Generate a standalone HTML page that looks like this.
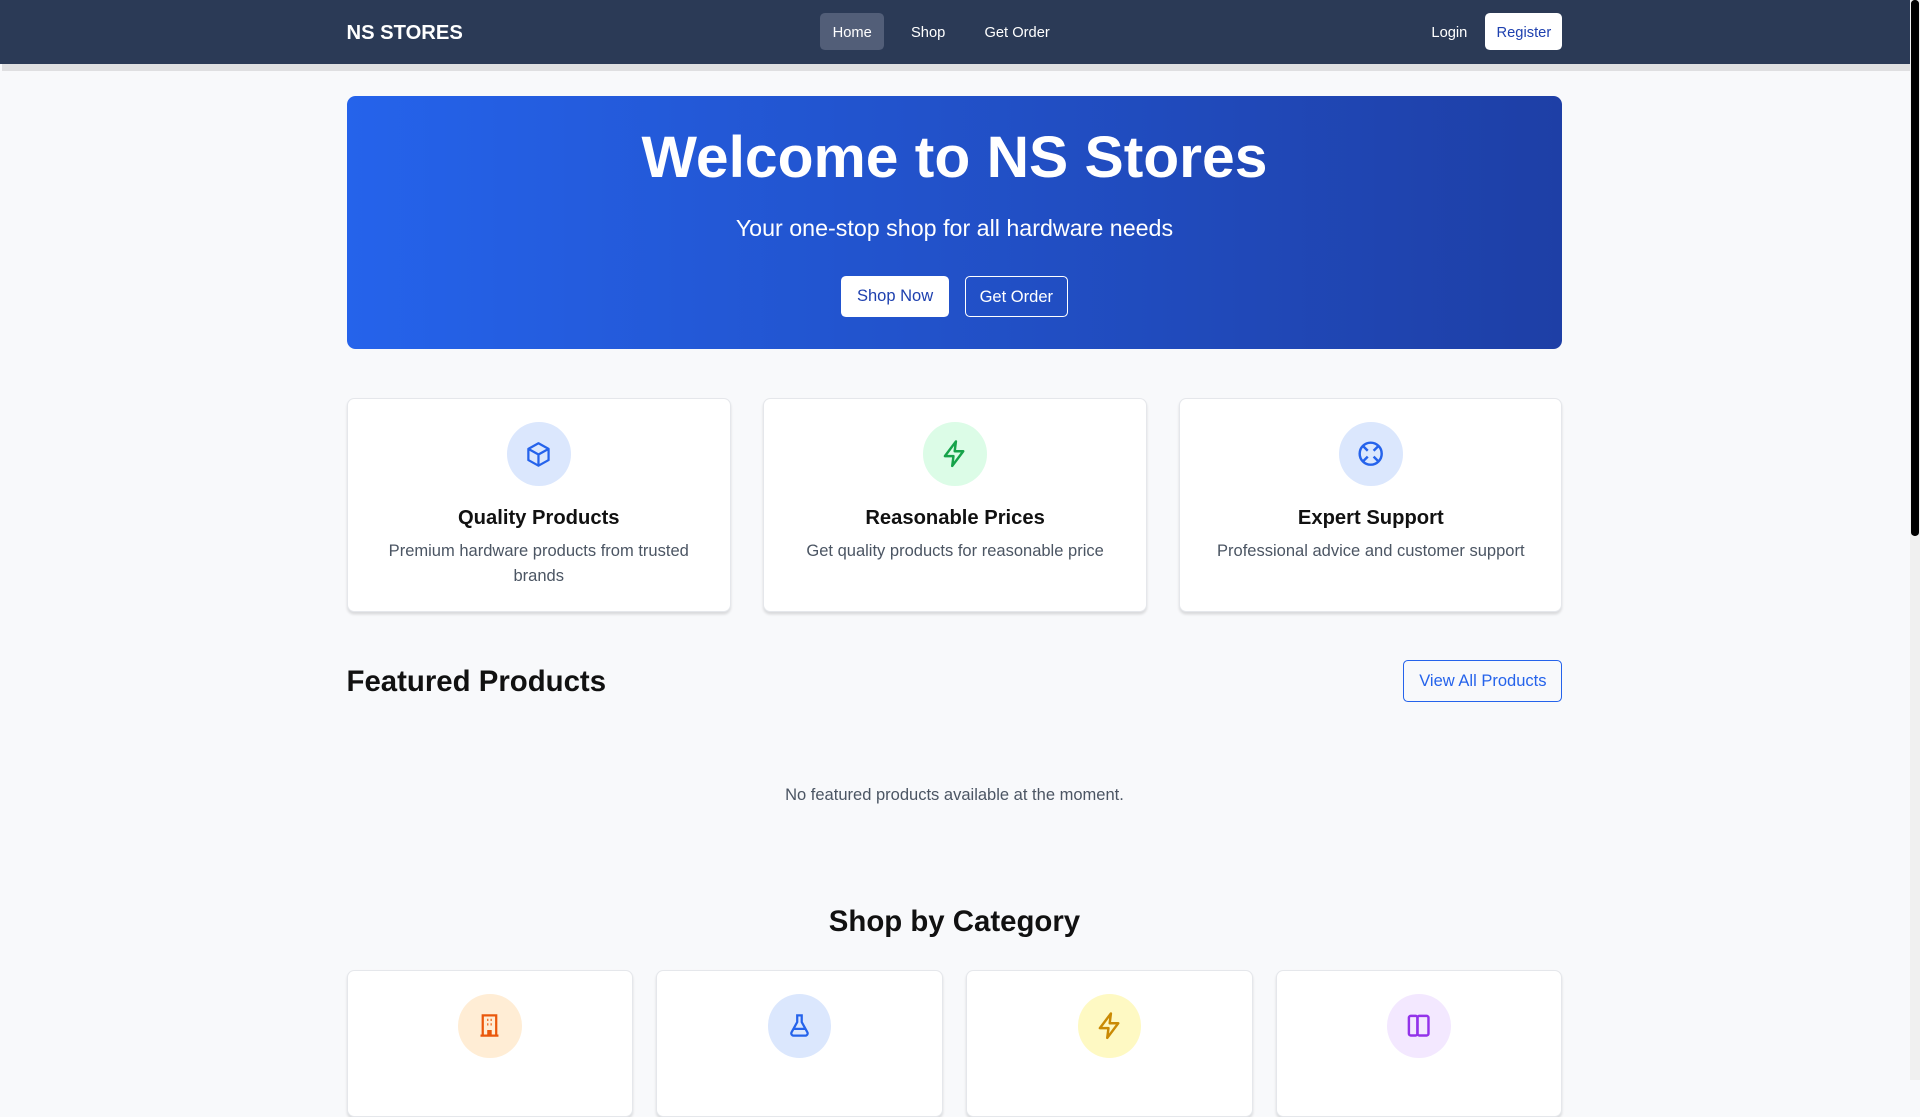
<!DOCTYPE html>
<html><head><meta charset="utf-8"><style>
html{zoom:1.22449}
*{box-sizing:border-box;margin:0;padding:0}
body{width:1568px;height:882px;overflow:hidden;background:#f8f9fb;font-family:"Liberation Sans",Arial,sans-serif;position:relative;color:#111}
.nav{position:absolute;left:0;top:0;width:1560px;height:52px;background:#2b3a56}
.strip{position:absolute;left:2px;top:52px;width:1558px;height:6px;background:#dfdfe1}
.sb{position:absolute;left:1560px;top:0;width:8px;height:882px;background:#f0f0f0}
.sb div{position:absolute;left:1px;top:0;width:6px;height:438px;background:#000;border-radius:3px}
.logo{position:absolute;left:283px;top:18px;color:#fff;font-weight:bold;font-size:16.5px}
.nl{position:absolute;top:11px;height:30px;line-height:34px;color:#fff;font-size:12px;padding:0 10px;border-radius:4px;white-space:nowrap}
.hero{position:absolute;left:283px;top:78px;width:993px;height:207px;border-radius:7px;background:linear-gradient(90deg,#2563eb,#1e3fa6);color:#fff;text-align:center}
.hero h1{font-size:48px;margin-top:23px;line-height:56px}
.hero p{font-size:19px;margin-top:19px}
.btn{position:absolute;top:147px;height:34px;line-height:32px;font-size:13.5px;border-radius:4px;white-space:nowrap;text-align:center}
.card{position:absolute;background:#fff;border:1px solid #e5e7eb;border-radius:6px;box-shadow:0 2px 2px rgba(0,0,0,.12);text-align:center}
.ic{width:52px;height:52px;border-radius:50%;margin:19px auto 0;display:flex;align-items:center;justify-content:center}
.card h3{font-size:16.5px;margin-top:17px}
.card p{font-size:13.5px;color:#4b5563;line-height:20px;margin:8px 16px 0}
h2{position:absolute;font-size:24px;font-weight:bold}
</style></head><body>
<div class="nav">
<div class="logo">NS STORES</div>
<div class="nl" style="left:670px;background:#525e78">Home</div>
<div class="nl" style="left:734px">Shop</div>
<div class="nl" style="left:794px">Get Order</div>
<div class="nl" style="left:1159px">Login</div>
<div class="nl" style="left:1213px;background:#fff;color:#1e40af;width:63px;padding:0;text-align:center">Register</div>
</div>
<div class="strip"></div>
<div class="sb"><div></div></div>
<div class="hero">
<h1>Welcome to NS Stores</h1>
<p>Your one-stop shop for all hardware needs</p>
<div class="btn" style="left:404px;width:88px;background:#fff;color:#1e40af">Shop Now</div>
<div class="btn" style="left:505px;width:84px;border:1px solid #fff;color:#fff">Get Order</div>
</div>

<div class="card" style="left:283px;top:325px;width:314px;height:175px">
<div class="ic" style="background:#dbe7fd"><svg width="22" height="22" viewBox="0 0 24 24" fill="none" stroke="#2563eb" stroke-width="2" stroke-linejoin="round"><path d="M12 2l9 5v10l-9 5-9-5V7z M3 7l9 5 9-5 M12 12v10"/></svg></div>
<h3>Quality Products</h3><p>Premium hardware products from trusted brands</p></div>
<div class="card" style="left:623px;top:325px;width:314px;height:175px">
<div class="ic" style="background:#dcfce7"><svg width="24" height="24" viewBox="0 0 24 24" fill="none" stroke="#16a34a" stroke-width="2" stroke-linejoin="round"><path d="M13 2L4 14h7l-1 8 9-12h-7z"/></svg></div>
<h3>Reasonable Prices</h3><p>Get quality products for reasonable price</p></div>
<div class="card" style="left:963px;top:325px;width:313px;height:175px">
<div class="ic" style="background:#dbe7fd"><svg width="24" height="24" viewBox="0 0 24 24" fill="none" stroke="#2563eb" stroke-width="2"><circle cx="12" cy="12" r="9"/><path d="M5.6 5.6l4 4M18.4 5.6l-4 4M5.6 18.4l4-4M18.4 18.4l-4-4"/></svg></div>
<h3>Expert Support</h3><p>Professional advice and customer support</p></div>

<h2 style="left:283px;top:543px">Featured Products</h2>
<div style="position:absolute;left:1146px;top:539px;width:130px;height:34px;border:1px solid #2563eb;border-radius:4px;color:#2563eb;font-size:13.5px;text-align:center;line-height:32px">View All Products</div>
<div style="position:absolute;left:283px;width:993px;top:641px;text-align:center;font-size:13.5px;color:#4b5563">No featured products available at the moment.</div>
<h2 style="left:283px;width:993px;text-align:center;top:739px">Shop by Category</h2>

<div class="card" style="left:283px;top:792px;width:234px;height:120px"><div class="ic" style="background:#ffedd5"><svg width="22" height="22" viewBox="0 0 24 24" fill="none" stroke="#ea580c" stroke-width="2"><path d="M6 21V3h12v18M4 21h16M10 7h1M13 7h1M10 11h1M13 11h1M11 21v-4h2v4"/></svg></div></div>
<div class="card" style="left:536px;top:792px;width:234px;height:120px"><div class="ic" style="background:#dbe7fd"><svg width="22" height="22" viewBox="0 0 24 24" fill="none" stroke="#2563eb" stroke-width="2" stroke-linejoin="round"><path d="M9 3h6M10 3v6l-5 9a2 2 0 002 3h10a2 2 0 002-3l-5-9V3M7 15h10"/></svg></div></div>
<div class="card" style="left:789px;top:792px;width:234px;height:120px"><div class="ic" style="background:#fef9c3"><svg width="24" height="24" viewBox="0 0 24 24" fill="none" stroke="#ca8a04" stroke-width="2" stroke-linejoin="round"><path d="M13 2L4 14h7l-1 8 9-12h-7z"/></svg></div></div>
<div class="card" style="left:1042px;top:792px;width:234px;height:120px"><div class="ic" style="background:#f3e8ff"><svg width="24" height="24" viewBox="0 0 24 24" fill="none" stroke="#9333ea" stroke-width="2"><rect x="4" y="4" width="7" height="16" rx="1.5"/><rect x="11" y="4" width="9" height="16" rx="1.5"/></svg></div></div>
</body></html>
